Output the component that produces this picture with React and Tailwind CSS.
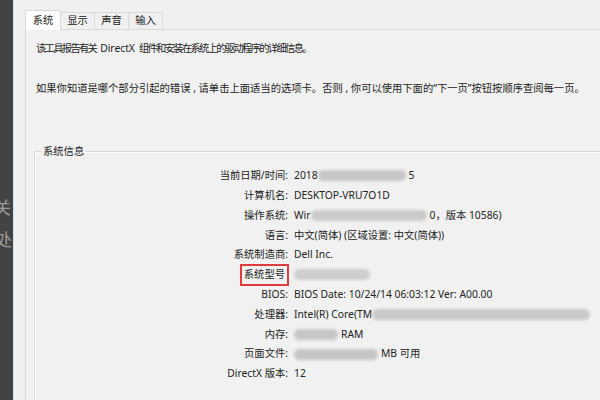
import React from 'react';

const Blur = ({ w, tone = 'bg-[#c6c6c6]' }) => (
    <span className={`inline-block h-[11px] rounded-full blur-[1.5px] align-middle ${tone}`} style={{ width: w }} />
);

const rows = [
    { label: '当前日期/时间:', value: <>2018<Blur w={88} /><span className="ml-[3px]">5</span></> },
    { label: '计算机名:', value: 'DESKTOP-VRU7O1D' },
    { label: '操作系统:', value: <>Wir<Blur w={116} tone="bg-[#cbcbcb]" /><span className="ml-[3px]">0，版本 10586)</span></> },
    { label: '语言:', value: '中文(简体) (区域设置: 中文(简体))' },
    { label: '系统制造商:', value: 'Dell Inc.' },
    { label: '系统型号', marked: true, value: <Blur w={76} tone="bg-[#cdcdcd]" /> },
    { label: 'BIOS:', value: 'BIOS Date: 10/24/14 06:03:12 Ver: A00.00' },
    { label: '处理器:', value: <>Intel(R) Core(TM<Blur w={218} tone="bg-[#c9c9c9]" /></> },
    { label: '内存:', value: <><Blur w={44} /><span className="ml-[3px]">RAM</span></> },
    { label: '页面文件:', value: <><Blur w={84} /><span className="ml-[3px]">MB 可用</span></> },
    { label: 'DirectX 版本:', value: '12' },
];

const tabs = ['系统', '显示', '声音', '输入'];

export default function App() {
    return (
        <div className="w-[600px] h-[400px] flex overflow-hidden bg-[#f0f0f0] text-[10.3px] text-[#222222]" style={{ fontFamily: '"Noto Sans", "Noto Sans CJK SC", sans-serif' }}>
            {/* dark window behind */}
            <div className="w-[13px] shrink-0 bg-[#434343] relative overflow-hidden">
                <span className="absolute left-[-6px] top-[195px] text-[17px] text-[#9d9d9d]">关</span>
                <span className="absolute left-[-5px] top-[227px] text-[17px] text-[#9d9d9d]">处</span>
            </div>
            <div className="w-px shrink-0 bg-[#cfe7f8]" />

            <div className="flex-1 min-w-0 flex flex-col pl-[11px] pt-[10px]">
                {/* tabs */}
                <div className="flex items-end h-[19px]">
                    {tabs.map((t, i) => (
                        <div
                            key={t}
                            className={i === 0
                                ? 'h-[20px] w-[36px] bg-white border border-b-0 border-[#d9d9d9] flex items-center justify-center -mb-px relative z-10'
                                : 'h-[17px] w-[34px] bg-[#f0f0f0] border border-b-0 border-l-0 border-[#dadada] flex items-center justify-center'}
                        >
                            {t}
                        </div>
                    ))}
                </div>

                {/* tab page */}
                <div className="flex-1 border-l border-t border-[#dadada] bg-[#f1f1f1] pl-[10px] pt-[8px] flex flex-col">
                    <div className="h-[20px] leading-[20px] whitespace-nowrap tracking-[-1.7px]">
                        该工具报告有关<span className="tracking-normal mx-[4px]">DirectX</span>组件和安装在系统上的驱动程序的详细信息。
                    </div>
                    <div className="h-[20px] leading-[20px] mt-[20px] whitespace-nowrap">如果你知道是哪个部分引起的错误 , 请单击上面适当的选项卡。否则 , 你可以使用下面的“下一页”按钮按顺序查阅每一页。</div>

                    {/* group box */}
                    <div className="relative mt-[53px] -ml-[2px] flex-1 border-l border-t border-[#d7d7d7] shadow-[inset_1px_1px_0_#ffffff]">
                        <span className="absolute -top-[10px] left-[6px] px-[2px] bg-[#f1f1f1] leading-[18px]">系统信息</span>
                        <div className="pt-[14px] grid grid-cols-[253px_1fr] gap-x-[6px]">
                            {rows.map((r) => (
                                <React.Fragment key={r.label}>
                                    <div className="h-[19.8px] flex items-center justify-end whitespace-nowrap">
                                        {r.marked ? (
                                            <span className="border-2 border-[#e23b3b] px-[2px] h-[22px] flex items-center -mr-[1px]">{r.label}</span>
                                        ) : r.label}
                                    </div>
                                    <div className="h-[19.8px] flex items-center whitespace-nowrap">{r.value}</div>
                                </React.Fragment>
                            ))}
                        </div>
                    </div>
                </div>
            </div>
        </div>
    );
}
